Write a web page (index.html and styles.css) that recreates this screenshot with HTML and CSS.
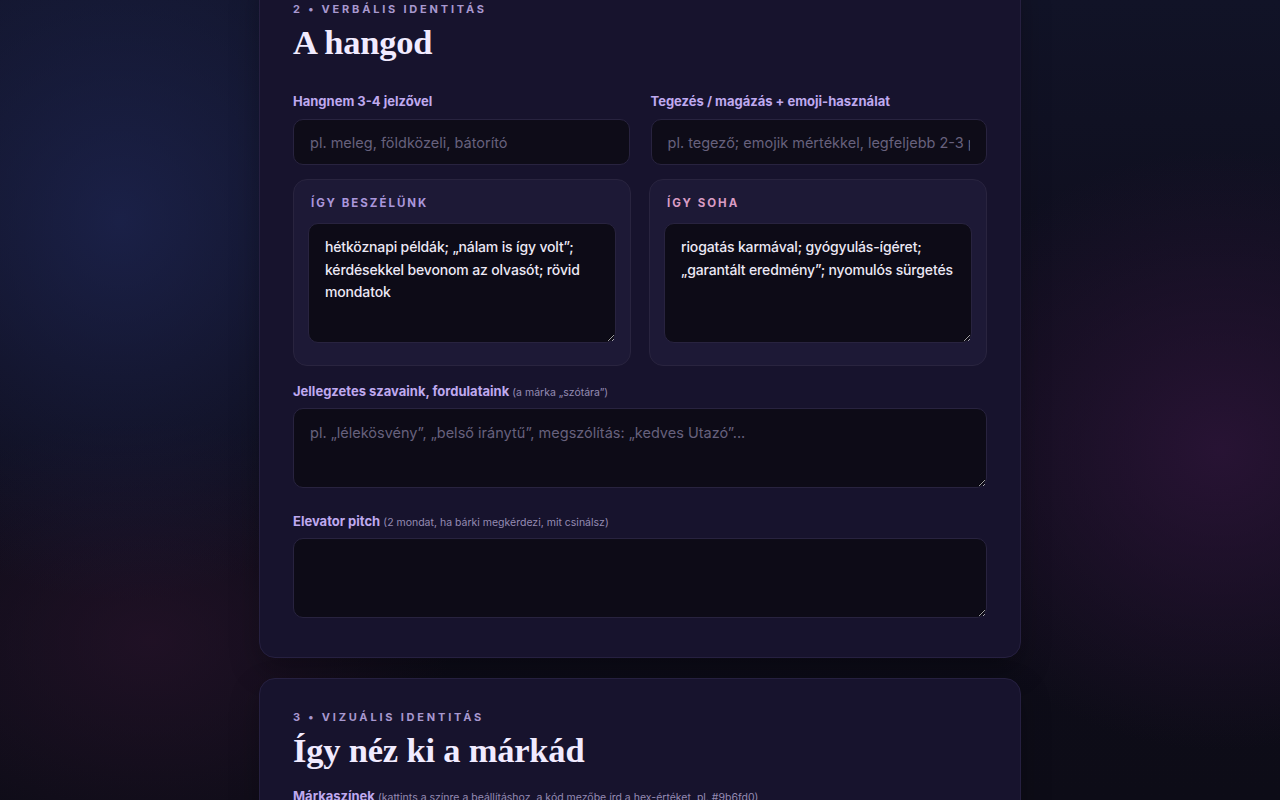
FILE: index.html
```html
<!DOCTYPE html>
<html lang="hu">
<head>
<meta charset="utf-8">
<title>Márka kézikönyv</title>
<link rel="stylesheet" href="styles.css">
</head>
<body>
<main class="page">
  <section class="card card-first">
    <p class="eyebrow">2 • Verbális identitás</p>
    <h2 class="title">A hangod</h2>

    <div class="pair">
      <div class="field">
        <label class="label" for="tone">Hangnem 3-4 jelzővel</label>
        <input class="input" id="tone" type="text" placeholder="pl. meleg, földközeli, bátorító">
      </div>
      <div class="field">
        <label class="label" for="address">Tegezés / magázás + emoji-használat</label>
        <input class="input" id="address" type="text" placeholder="pl. tegező; emojik mértékkel, legfeljebb 2-3 posztonként">
      </div>
    </div>

    <div class="boxes">
      <div class="box">
        <div class="box-title">Így beszélünk</div>
        <textarea class="area area-box">hétköznapi példák; „nálam is így volt”; kérdésekkel bevonom az olvasót; rövid mondatok</textarea>
      </div>
      <div class="box">
        <div class="box-title box-title-neg">Így soha</div>
        <textarea class="area area-box">riogatás karmával; gyógyulás-ígéret; „garantált eredmény”; nyomulós sürgetés</textarea>
      </div>
    </div>

    <div class="field field-words">
      <label class="label" for="words">Jellegzetes szavaink, fordulataink <span class="note">(a márka „szótára”)</span></label>
      <textarea class="area area-wide" id="words" placeholder="pl. „lélekösvény”, „belső iránytű”, megszólítás: „kedves Utazó”..."></textarea>
    </div>

    <div class="field field-pitch">
      <label class="label" for="pitch">Elevator pitch <span class="note">(2 mondat, ha bárki megkérdezi, mit csinálsz)</span></label>
      <textarea class="area area-wide" id="pitch"></textarea>
    </div>
  </section>

  <section class="card">
    <p class="eyebrow">3 • Vizuális identitás</p>
    <h2 class="title">Így néz ki a márkád</h2>
    <div class="label label-colors">Márkaszínek <span class="note">(kattints a színre a beállításhoz, a kód mezőbe írd a hex-értéket, pl. #9b6fd0)</span></div>
  </section>
</main>
</body>
</html>
```

FILE: styles.css
```css
* {
  box-sizing: border-box;
}

html, body {
  margin: 0;
  padding: 0;
}

body {
  min-height: 100vh;
  font-family: Inter, "Noto Sans", "DejaVu Sans", sans-serif;
  color: #ece8f5;
  background-color: #0d0c17;
  background-image:
    radial-gradient(ellipse 340px 380px at 120px 220px, rgba(30, 38, 84, 0.75), rgba(30, 38, 84, 0) 100%),
    radial-gradient(ellipse 320px 300px at 1220px 450px, rgba(44, 20, 56, 0.85), rgba(44, 20, 56, 0) 100%),
    radial-gradient(ellipse 300px 220px at 150px 640px, rgba(36, 18, 40, 0.8), rgba(36, 18, 40, 0) 100%),
    linear-gradient(180deg, #111327 0%, #0e0d1b 45%, #0d0c17 100%);
  background-attachment: fixed;
  overflow: hidden;
}

.page {
  width: 762px;
  margin: -30px auto 0;
  display: flex;
  flex-direction: column;
  gap: 20px;
}

.card {
  background: #17132d;
  border: 1px solid #262040;
  border-radius: 16px;
  padding: 31px 33px 39px;
  box-shadow: 0 12px 30px rgba(0, 0, 0, 0.25);
}

.eyebrow {
  margin: 0 0 6px;
  font-size: 11px;
  line-height: 14px;
  font-weight: 700;
  letter-spacing: 2.8px;
  text-transform: uppercase;
  color: #a898cf;
}

.title {
  margin: 0;
  font-family: "Liberation Serif", "Times New Roman", serif;
  font-weight: 700;
  font-size: 34.5px;
  line-height: 40px;
  color: #f1ebff;
  letter-spacing: -0.2px;
}

.pair {
  margin-top: 30px;
  display: grid;
  grid-template-columns: 1fr 1fr;
  column-gap: 21px;
}

.field {
  display: flex;
  flex-direction: column;
}

.label {
  display: block;
  font-size: 13px;
  line-height: 18px;
  height: 18px;
  font-weight: 700;
  color: #bfa9ef;
  margin-bottom: 9px;
}

.note {
  font-size: 10.5px;
  line-height: 1;
  font-weight: 400;
  color: #958bb3;
}

.input {
  height: 46px;
  width: 100%;
  padding: 0 16px;
  border: 1px solid #28233f;
  border-radius: 10px;
  background: #0e0c18;
  color: #ece8f5;
  font-family: inherit;
  font-size: 14.5px;
  outline: none;
}

.input::placeholder,
.area::placeholder {
  color: #67617d;
  opacity: 1;
}

.boxes {
  margin-top: 14px;
  display: grid;
  grid-template-columns: 1fr 1fr;
  column-gap: 18px;
}

.box {
  background: #1d1936;
  border: 1px solid #29243f;
  border-radius: 14px;
  padding: 16px 14px 22px 14px;
  display: flex;
  flex-direction: column;
}

.box-title {
  padding-left: 3px;
  font-size: 11.5px;
  line-height: 14px;
  font-weight: 700;
  letter-spacing: 2px;
  text-transform: uppercase;
  color: #aa96db;
  margin-bottom: 13px;
}

.box-title-neg {
  color: #d99cc4;
}

.area {
  display: block;
  width: 100%;
  border: 1px solid #28233f;
  border-radius: 10px;
  background: #0d0b17;
  color: #ece8f5;
  font-family: inherit;
  outline: none;
}

.area-box {
  height: 120px;
  padding: 12px 16px;
  font-size: 14px;
  line-height: 22.5px;
  font-weight: 500;
  letter-spacing: -0.15px;
}

.area-wide {
  height: 80px;
  padding: 13px 16px;
  font-size: 14.5px;
  line-height: 22px;
}

.field-words {
  margin-top: 16px;
}

.field-words .label,
.field-pitch .label {
  margin-bottom: 8px;
}

.field-pitch {
  margin-top: 24px;
}

.label-colors {
  margin-top: 17px;
}
```
